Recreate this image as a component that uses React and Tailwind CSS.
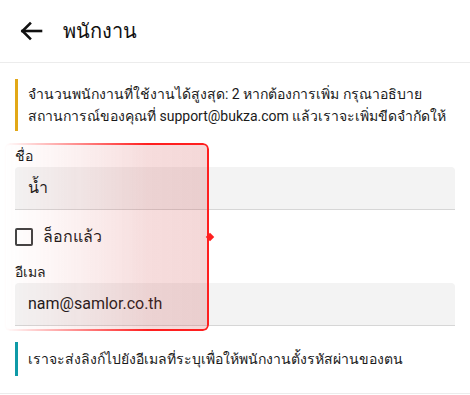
import React from 'react'

function Notice({ color, h, children }) {
  return (
    <div className={`border-l-[3px] ${color} ${h} pl-[10px] flex flex-col justify-center text-[14px] leading-[22px] text-[#1a1a1a]`}>
      {children}
    </div>
  )
}

function Field({ label, value }) {
  return (
    <div>
      <div className="h-[20px] flex items-center text-[14px] text-[#1a1a1a]">{label}</div>
      <div className="mt-[1px] h-[43px] bg-[#f3f3f3] rounded-t-[4px] border-b border-[#d6d6d6] flex items-center px-[13px] text-[16px] text-[#1a1a1a]">
        {value}
      </div>
    </div>
  )
}

export default function App() {
  return (
    <div className="w-[470px] h-[395px] bg-white relative overflow-hidden font-['Roboto',sans-serif]">
      {/* header */}
      <div className="h-[63px] border-b border-[#ececec] flex items-center px-[19px] gap-[20px]">
        <svg width="24" height="24" viewBox="0 0 24 24" fill="none" stroke="#111" strokeWidth="2.6" strokeLinecap="square">
          <path d="M22 12H3.5" />
          <path d="M11 4.5 3.5 12l7.5 7.5" />
        </svg>
        <h1 className="text-[20px] text-[#111] font-medium">พนักงาน</h1>
      </div>

      <div className="px-[15px] pt-[16px] flex flex-col">
        <Notice color="border-[#e2a817]" h="h-[52px]">
          <div className="h-[22px] whitespace-nowrap">จำนวนพนักงานที่ใช้งานได้สูงสุด: 2 หากต้องการเพิ่ม กรุณาอธิบาย</div>
          <div className="h-[22px] whitespace-nowrap">สถานการณ์ของคุณที่ support@bukza.com แล้วเราจะเพิ่มขีดจำกัดให้</div>
        </Notice>

        <div className="mt-[15px]">
          <Field label="ชื่อ" value="น้ำ" />
        </div>

        <label className="flex items-center gap-[10px] mt-[17px] h-[19px]">
          <span className="w-[18px] h-[18px] border-2 border-[#444] rounded-[2px]" />
          <span className="text-[16px] text-[#1a1a1a]">ล็อกแล้ว</span>
        </label>

        <div className="mt-[16px]">
          <Field label="อีเมล" value="nam@samlor.co.th" />
        </div>

        <div className="mt-[16px]">
          <Notice color="border-[#0e9aa7]" h="h-[34px]">
            <div className="h-[22px] whitespace-nowrap">เราจะส่งลิงก์ไปยังอีเมลที่ระบุเพื่อให้พนักงานตั้งรหัสผ่านของตน</div>
          </Notice>
        </div>
      </div>

      <div className="absolute left-0 right-0 top-[393px] border-t border-[#ececec]" />

      {/* highlight overlay */}
      <div className="absolute left-[4px] top-[143px] w-[205px] h-[188px] pointer-events-none">
        <div className="absolute inset-0 rounded-[6px] shadow-[0_2px_10px_rgba(0,0,0,0.15)] [mask-image:linear-gradient(to_right,transparent_15%,black_75%)]" />
        <div className="absolute inset-0 rounded-[6px] border-2 border-[#ff1f1f] bg-gradient-to-r from-[rgba(220,60,60,0.12)] to-[rgba(200,60,60,0.2)] [mask-image:linear-gradient(to_right,transparent,black_70%)]" />
        <div className="absolute right-[-4px] top-[91px] w-[6px] h-[6px] bg-[#ff1f1f] rotate-45" />
      </div>
    </div>
  )
}
